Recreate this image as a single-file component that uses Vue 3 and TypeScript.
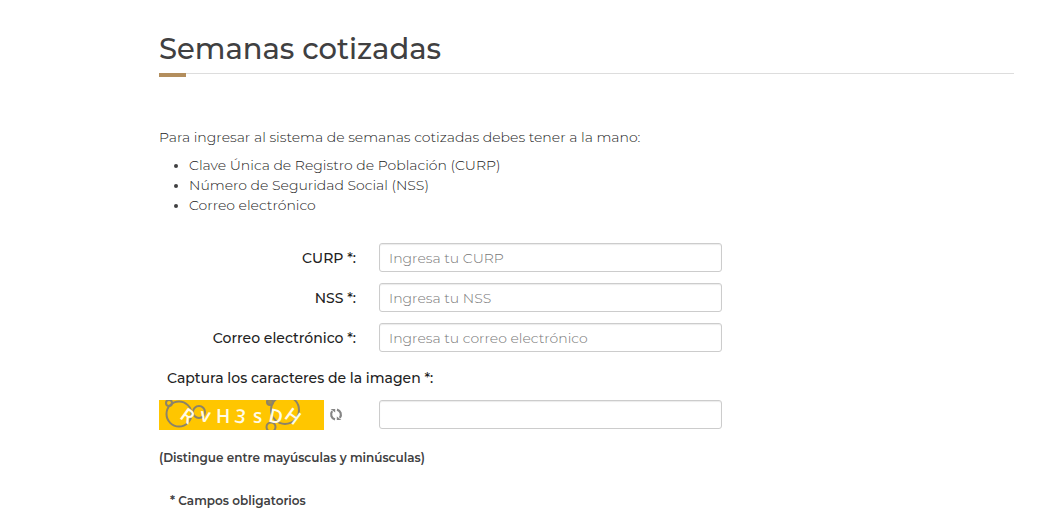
<script setup lang="ts">
import { reactive } from 'vue'

interface Field {
  id: 'curp' | 'nss' | 'correo'
  label: string
  placeholder: string
  type: string
}

const requirements: string[] = [
  'Clave Única de Registro de Población (CURP)',
  'Número de Seguridad Social (NSS)',
  'Correo electrónico',
]

const fields: Field[] = [
  { id: 'curp', label: 'CURP *:', placeholder: 'Ingresa tu CURP', type: 'text' },
  { id: 'nss', label: 'NSS *:', placeholder: 'Ingresa tu NSS', type: 'text' },
  { id: 'correo', label: 'Correo electrónico *:', placeholder: 'Ingresa tu correo electrónico', type: 'email' },
]

const form = reactive({ curp: '', nss: '', correo: '', captcha: '' })
</script>

<template>
  <main class="page">
    <h1 class="title">Semanas cotizadas</h1>

    <p class="intro">Para ingresar al sistema de semanas cotizadas debes tener a la mano:</p>
    <ul class="requirements">
      <li v-for="item in requirements" :key="item">{{ item }}</li>
    </ul>

    <form class="form" @submit.prevent>
      <div v-for="field in fields" :key="field.id" class="row">
        <label class="label" :for="field.id">{{ field.label }}</label>
        <input :id="field.id" v-model="form[field.id]" class="control" :type="field.type" :placeholder="field.placeholder" />
      </div>

      <label class="captcha-label" for="captcha">Captura los caracteres de la imagen *:</label>
      <div class="row captcha-row">
        <div class="captcha">
          <svg class="captcha-image" viewBox="0 0 165 30" role="img" aria-label="Imagen de verificación">
            <rect width="165" height="30" fill="#ffc600" />
            <g fill="none" stroke="#8c8368" stroke-width="2">
              <circle cx="20" cy="14" r="12.5" />
              <circle cx="10" cy="3" r="3" />
              <circle cx="40" cy="12" r="6" />
              <circle cx="126" cy="10" r="14" />
              <circle cx="111" cy="2" r="3" fill="#a98f3e" />
              <circle cx="112" cy="27" r="4.5" />
            </g>
            <g class="captcha-text">
              <text x="-5" y="7" transform="translate(28 15) rotate(36)">R</text>
              <text x="-5" y="5" transform="translate(46 17) rotate(10)">v</text>
              <text x="57" y="23">H</text>
              <text x="-5" y="7" transform="translate(81 16) rotate(8)">3</text>
              <text x="94" y="23">s</text>
              <text x="-7" y="7" transform="translate(117 16) rotate(12)">D</text>
              <text x="-7" y="7" transform="translate(134 16) rotate(36)">H</text>
            </g>
          </svg>
          <button class="refresh" type="button" aria-label="Cambiar imagen">
            <svg viewBox="0 0 14 14" width="14" height="14" aria-hidden="true">
              <path d="M6 11.4A5.2 5.2 0 0 1 3.2 3.2M8 1.6a5.2 5.2 0 0 1 2.8 8.2" fill="none" stroke="#858585" stroke-width="2.2" />
              <path d="M1.6 1h4.6v3.4zM12.4 12H7.8V8.6z" fill="#858585" />
            </svg>
          </button>
        </div>
        <input id="captcha" v-model="form.captcha" class="control" type="text" autocomplete="off" />
      </div>
      <p class="note">(Distingue entre mayúsculas y minúsculas)</p>
      <p class="note required">* Campos obligatorios</p>
    </form>
  </main>
</template>

<style>
body {
  margin: 0;
  background: #fff;
}
</style>

<style scoped>
.page {
  box-sizing: border-box;
  padding: 24px 23px 4px 159px;
  color: #404041;
  font-family: Montserrat, Inter, "Open Sans", sans-serif;
  font-size: 14px;
  line-height: 20px;
}

.title {
  position: relative;
  margin: 0 0 53px;
  border-bottom: 1px solid #ddd;
  font-size: 29px;
  font-weight: 500;
  line-height: 49px;
}

.title::after {
  content: "";
  position: absolute;
  top: 100%;
  left: 0;
  width: 27px;
  height: 4px;
  background: #b38e5d;
}

.intro {
  margin: 0 0 8px;
  color: #222;
  font-weight: 300;
}

.requirements {
  margin: 0 0 28px;
  padding-left: 30px;
  color: #222;
  font-weight: 300;
}

.requirements li::marker {
  color: #404041;
  font-size: 12px;
}

.row {
  display: grid;
  grid-template-columns: 197px minmax(0, 343px);
  column-gap: 23px;
  align-items: center;
  margin-bottom: 11px;
}

.label {
  color: #222;
  font-weight: 500;
  text-align: right;
}

.control {
  box-sizing: border-box;
  width: 100%;
  height: 29px;
  padding: 0 9px;
  border: 1px solid #ccc;
  border-radius: 3px;
  box-shadow: inset 0 1px 1px rgba(0, 0, 0, 0.08);
  background: #fff;
  color: #404041;
  font: inherit;
  font-weight: 300;
}

.control::placeholder {
  color: #777;
  opacity: 1;
}

.captcha-label {
  display: block;
  margin: 16px 0 12px;
  padding-left: 8px;
  color: #222;
  font-weight: 500;
}

.captcha-row {
  align-items: start;
  margin-bottom: 18px;
}

.captcha {
  display: flex;
  align-items: center;
  gap: 5px;
}

.captcha-image {
  width: 165px;
  height: 30px;
}

.captcha-text {
  fill: #fffbe8;
  font-family: "Open Sans", sans-serif;
  font-size: 19px;
  font-weight: 600;
}

.refresh {
  display: flex;
  padding: 0;
  border: 0;
  background: none;
  cursor: pointer;
}

.note {
  margin: 0 0 23px;
  font-size: 12px;
  font-weight: 600;
}

.required {
  margin: 0;
  padding-left: 11px;
}
</style>
